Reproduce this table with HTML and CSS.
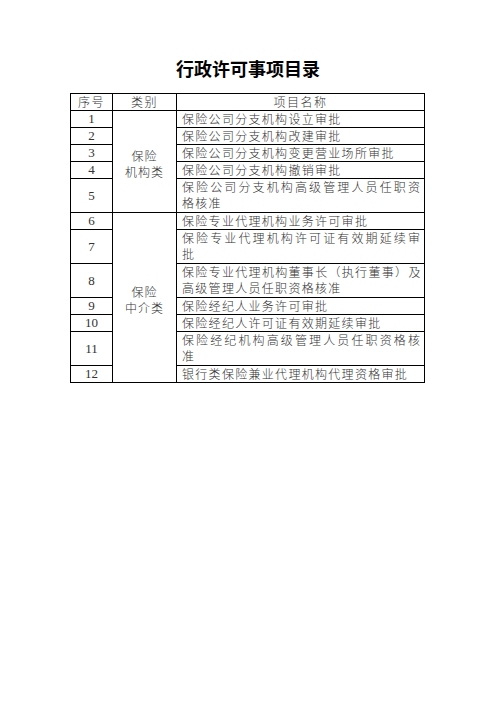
FILE: index.html
```html
<!DOCTYPE html>
<html lang="zh-CN">
<head>
<meta charset="utf-8">
<title>行政许可事项目录</title>
<link rel="stylesheet" href="styles.css">
</head>
<body>
<div class="page">
  <h1 class="title">行政许可事项目录</h1>
  <table class="catalog">
    <colgroup><col class="c-no"><col class="c-cat"><col class="c-name"></colgroup>
    <thead>
      <tr><th>序号</th><th>类别</th><th>项目名称</th></tr>
    </thead>
    <tbody>
      <tr><td class="no">1</td><td class="cat cat-a" rowspan="5">保险<br>机构类</td><td class="name">保险公司分支机构设立审批</td></tr>
      <tr><td class="no">2</td><td class="name">保险公司分支机构改建审批</td></tr>
      <tr><td class="no">3</td><td class="name">保险公司分支机构变更营业场所审批</td></tr>
      <tr><td class="no">4</td><td class="name">保险公司分支机构撤销审批</td></tr>
      <tr class="two"><td class="no">5</td><td class="name"><span class="jl">保险公司分支机构高级管理人员任职资</span>格核准</td></tr>
      <tr><td class="no">6</td><td class="cat cat-b" rowspan="7">保险<br>中介类</td><td class="name">保险专业代理机构业务许可审批</td></tr>
      <tr class="two"><td class="no">7</td><td class="name"><span class="jl">保险专业代理机构许可证有效期延续审</span>批</td></tr>
      <tr class="two"><td class="no">8</td><td class="name"><span class="jl tight">保险专业代理机构董事长（执行董事）及</span>高级管理人员任职资格核准</td></tr>
      <tr><td class="no">9</td><td class="name">保险经纪人业务许可审批</td></tr>
      <tr><td class="no">10</td><td class="name">保险经纪人许可证有效期延续审批</td></tr>
      <tr class="two"><td class="no">11</td><td class="name"><span class="jl">保险经纪机构高级管理人员任职资格核</span>准</td></tr>
      <tr><td class="no">12</td><td class="name">银行类保险兼业代理机构代理资格审批</td></tr>
    </tbody>
  </table>
</div>
</body>
</html>
```

FILE: styles.css
```css
html, body {
  margin: 0;
  padding: 0;
  background: #ffffff;
}

.page {
  width: 496px;
  padding-top: 56px;
  box-sizing: border-box;
}

.title {
  margin: 0 0 13px 0;
  text-align: center;
  font-family: "Noto Sans CJK SC", sans-serif;
  font-size: 18px;
  line-height: 24px;
  font-weight: 700;
  color: #000;
}

.catalog {
  margin-left: 70px;
  width: 354px;
  table-layout: fixed;
  border-collapse: collapse;
  font-family: "Noto Sans CJK SC", sans-serif;
  font-size: 12px;
  color: #333;
}

.c-no { width: 42px; }
.c-cat { width: 64px; }
.c-name { width: 248px; }

.catalog th,
.catalog td {
  border: 1px solid #000;
  padding: 0;
  line-height: 16px;
  font-weight: 300;
  vertical-align: middle;
}

.catalog th {
  text-align: center;
  letter-spacing: 1.5px;
}

.catalog td.no {
  text-align: center;
  font-family: "Liberation Serif", serif;
  font-size: 13px;
  font-weight: 400;
  color: #333;
}

.catalog td.cat {
  text-align: center;
  letter-spacing: 1px;
  padding-top: 4px;
}

.catalog td.name {
  padding: 0 5px 0 5px;
  letter-spacing: 1.3px;
  white-space: nowrap;
}

.catalog tr.two td.name {
  padding-bottom: 1px;
}

.jl {
  display: block;
  text-align: justify;
  text-align-last: justify;
  letter-spacing: 0;
  margin-right: -1px;
}

.jl.tight {
  letter-spacing: -0.4px;
}
```
